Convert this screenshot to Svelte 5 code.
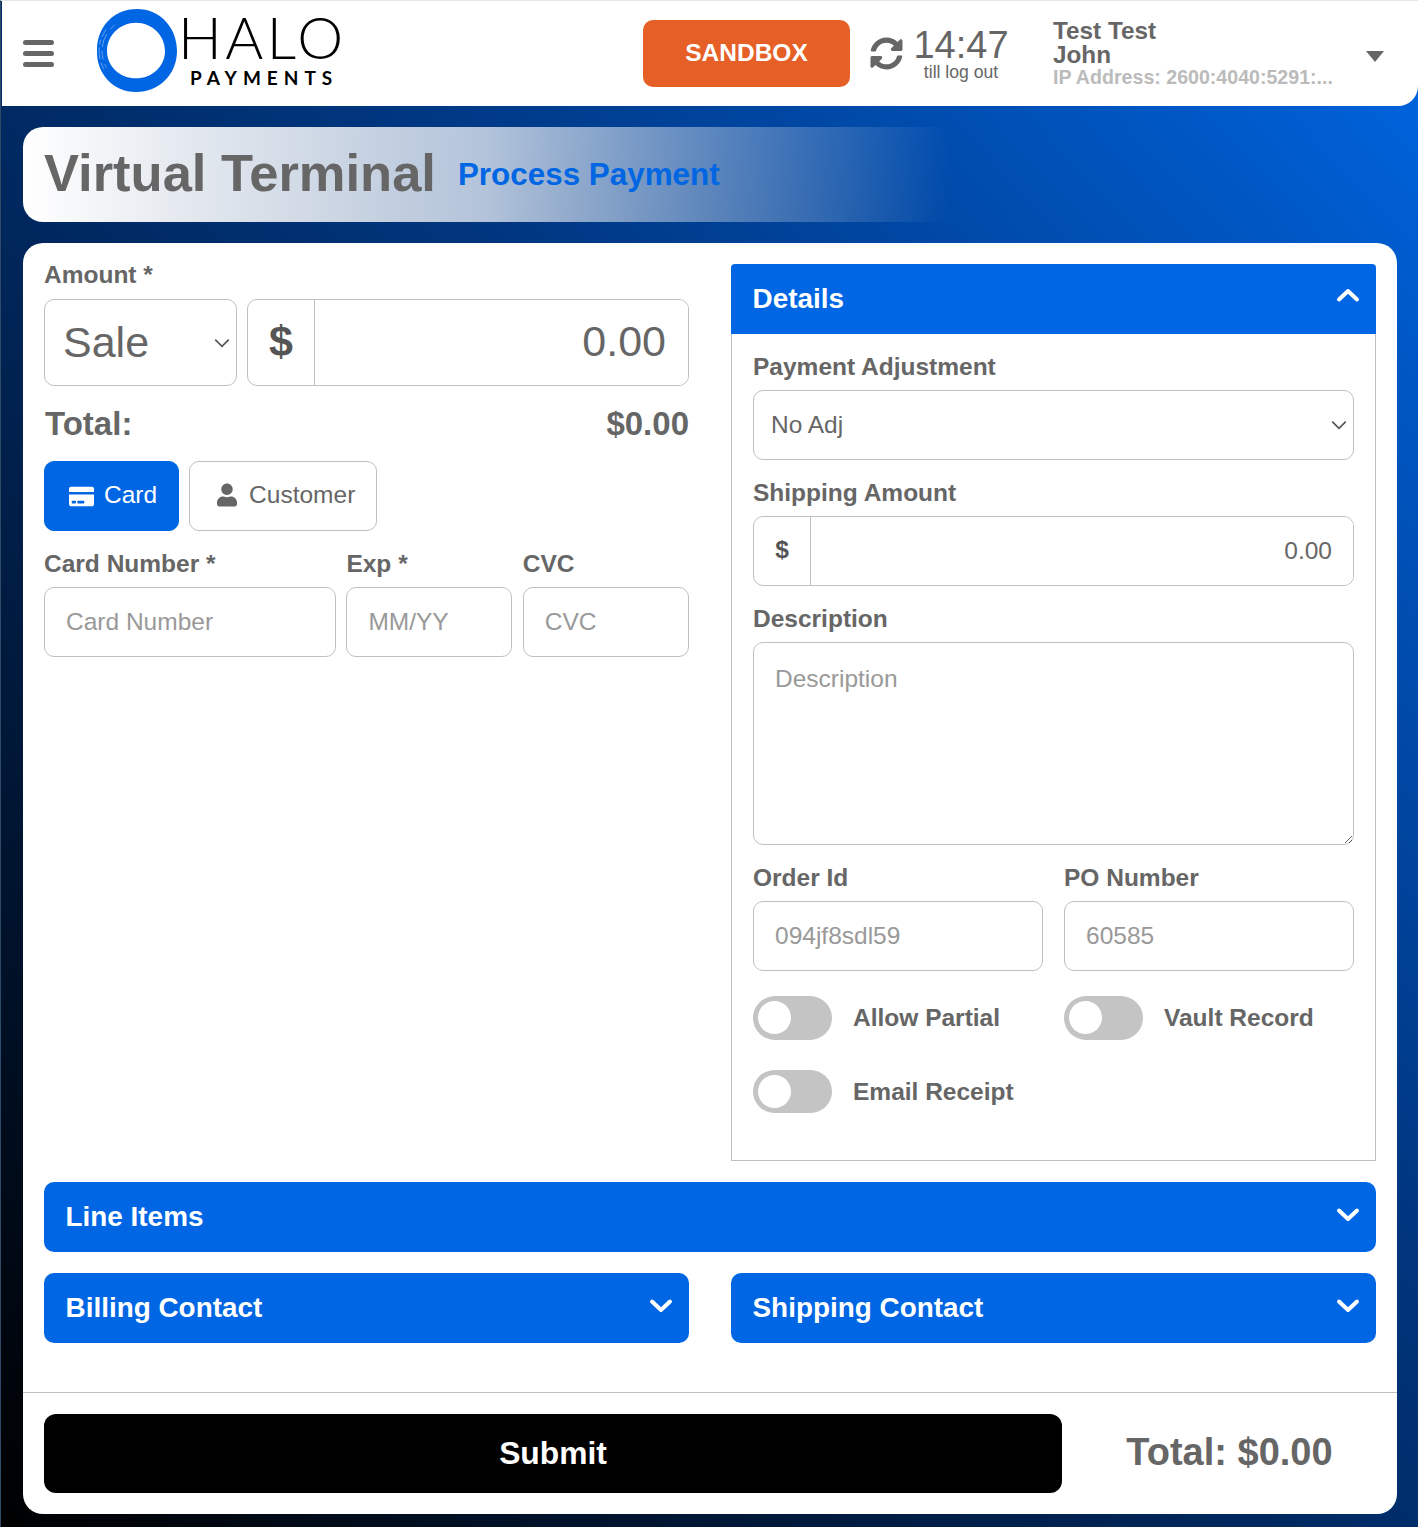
<script>
	let activeTab = $state('card');
	const chevron = { up: 'M3 15.500 12 7l9 8.500', down: 'M3 8.500 12 17l9-8.500' };
</script>

{#snippet chev(dir)}
	<svg class="chev" viewBox="0 0 24 24" fill="none" stroke="currentColor" stroke-width="4" stroke-linecap="round" stroke-linejoin="round" aria-hidden="true">
		<path d={chevron[dir]} />
	</svg>
{/snippet}

{#snippet toggle(label)}
	<label class="toggle">
		<span class="track"><span class="knob"></span></span>
		<span class="toggle-label">{label}</span>
	</label>
{/snippet}

<div class="page">
	<header class="topbar">
		<button class="burger" aria-label="Menu">
			<span></span><span></span><span></span>
		</button>
		<div class="logo">
			<svg class="ring" viewBox="0 0 82 86" preserveAspectRatio="none" aria-hidden="true">
				<path fill="#0066e3" fill-rule="evenodd" d="M41 0C64 0 81 19 81 43 81 67 63 85 40 85 17 85 0 66 1 42 1 18 18 0 41 0ZM40 14C24 14 11 27 11 43 11 59 24 71 40 71 56 71 69 59 69 43 69 27 56 14 40 14Z" />
				<g fill="none" stroke="#fff" stroke-width="0.700" opacity="0.5" transform="rotate(150 40 43)">
					<circle cx="40" cy="43" r="37" stroke-dasharray="7 4 12 3 5 3 9 200" />
					<circle cx="40" cy="43" r="34" stroke-dasharray="4 5 9 4 14 6 6 200" />
				</g>
			</svg>
			<div class="wordmark">
				<span class="halo">HALO</span>
				<span class="payments">PAYMENTS</span>
			</div>
		</div>

		<button class="sandbox">SANDBOX</button>

		<svg class="sync" viewBox="0 0 512 512" aria-hidden="true">
			<path fill="currentColor" d="M370.72 133.28C339.458 104.008 298.888 87.962 255.848 88c-77.458.068-144.328 53.178-162.791 126.85-1.344 5.363-6.122 9.15-11.651 9.15H24.103c-7.498 0-13.194-6.807-11.807-14.176C33.933 94.924 134.813 8 256 8c66.448 0 126.791 26.136 171.315 68.685L463.03 40.97C478.149 25.851 504 36.559 504 57.941V192c0 13.255-10.745 24-24 24H345.941c-21.382 0-32.09-25.851-16.971-40.971l41.75-41.749zM32 296h134.059c21.382 0 32.09 25.851 16.971 40.971l-41.75 41.75c31.262 29.273 71.835 45.319 114.876 45.28 77.418-.07 144.315-53.144 162.787-126.849 1.344-5.363 6.122-9.15 11.651-9.15h57.304c7.498 0 13.194 6.807 11.807 14.176C478.067 417.076 377.187 504 256 504c-66.448 0-126.791-26.136-171.315-68.685L48.97 471.03C33.851 486.149 8 475.441 8 454.059V320c0-13.255 10.745-24 24-24z" />
		</svg>
		<div class="timer">
			<span class="clock">14:47</span>
			<span class="till">till log out</span>
		</div>

		<div class="user">
			<div class="user-name">Test Test</div>
			<div class="user-name">John</div>
			<div class="user-ip">IP Address: 2600:4040:5291:...</div>
		</div>
		<span class="caret" aria-hidden="true"></span>
	</header>

	<main class="content">
		<div class="title-bar">
			<h1>Virtual Terminal</h1>
			<span class="subtitle">Process Payment</span>
		</div>

		<section class="card">
			<div class="card-body">
				<div class="columns">
					<div class="col">
						<div class="field-label first">Amount *</div>
						<div class="amount-row">
							<select class="big-select">
								<option>Sale</option>
							</select>
							<div class="group big">
								<span class="prefix">$</span>
								<input class="num" value="0.00" />
							</div>
						</div>
						<div class="total-row">
							<span>Total:</span>
							<span>$0.00</span>
						</div>
						<div class="tabs">
							<button class="tab" class:active={activeTab === 'card'} onclick={() => (activeTab = 'card')}>
								<svg class="tab-card" viewBox="0 0 576 512" aria-hidden="true">
									<path fill="currentColor" d="M0 432c0 26.500 21.500 48 48 48h480c26.500 0 48-21.500 48-48V210H0v222zm192-68c0-6.600 5.400-12 12-12h136c6.600 0 12 5.400 12 12v40c0 6.600-5.400 12-12 12H204c-6.600 0-12-5.400-12-12v-40zm-128 0c0-6.600 5.400-12 12-12h72c6.600 0 12 5.400 12 12v40c0 6.600-5.400 12-12 12H76c-6.600 0-12-5.400-12-12v-40zM576 80v70H0V80c0-26.500 21.500-48 48-48h480c26.500 0 48 21.500 48 48z" />
								</svg>
								Card
							</button>
							<button class="tab" class:active={activeTab === 'customer'} onclick={() => (activeTab = 'customer')}>
								<svg class="tab-user" viewBox="0 0 448 512" aria-hidden="true">
									<path fill="currentColor" d="M224 256c70.700 0 128-57.300 128-128S294.700 0 224 0 96 57.300 96 128s57.300 128 128 128zm89.600 32h-16.700c-22.200 10.200-46.900 16-72.900 16s-50.600-5.800-72.900-16h-16.700C60.200 288 0 348.200 0 422.400V464c0 26.500 21.500 48 48 48h352c26.500 0 48-21.500 48-48v-41.600c0-74.200-60.200-134.400-134.400-134.400z" />
								</svg>
								Customer
							</button>
						</div>
						<div class="card-fields">
							<div>
								<div class="field-label">Card Number *</div>
								<input class="text-input" placeholder="Card Number" />
							</div>
							<div>
								<div class="field-label">Exp *</div>
								<input class="text-input" placeholder="MM/YY" />
							</div>
							<div>
								<div class="field-label">CVC</div>
								<input class="text-input" placeholder="CVC" />
							</div>
						</div>
					</div>

					<div class="col">
						<div class="panel-head open">
							<span>Details</span>
							{@render chev('up')}
						</div>
						<div class="panel-body">
							<div class="field-label">Payment Adjustment</div>
							<select class="text-input select">
								<option>No Adj</option>
							</select>

							<div class="field-label spaced">Shipping Amount</div>
							<div class="group">
								<span class="prefix small">$</span>
								<input class="num small" value="0.00" />
							</div>

							<div class="field-label spaced">Description</div>
							<textarea class="text-input area" placeholder="Description"></textarea>

							<div class="split spaced">
								<div>
									<div class="field-label">Order Id</div>
									<input class="text-input" placeholder="094jf8sdl59" />
								</div>
								<div>
									<div class="field-label">PO Number</div>
									<input class="text-input" placeholder="60585" />
								</div>
							</div>

							<div class="split toggles">
								{@render toggle('Allow Partial')}
								{@render toggle('Vault Record')}
							</div>
							<div class="split toggles second">
								{@render toggle('Email Receipt')}
							</div>
						</div>
					</div>
				</div>

				<div class="panel-head closed wide">
					<span>Line Items</span>
					{@render chev('down')}
				</div>

				<div class="columns contacts">
					<div class="panel-head closed">
						<span>Billing Contact</span>
						{@render chev('down')}
					</div>
					<div class="panel-head closed">
						<span>Shipping Contact</span>
						{@render chev('down')}
					</div>
				</div>
			</div>

			<footer class="card-foot">
				<button class="submit">Submit</button>
				<div class="foot-total">Total: $0.00</div>
			</footer>
		</section>
	</main>
</div>

<style>
	:global(body) {
		margin: 0;
	}
	.page {
		box-sizing: border-box;
		height: 1527px;
		overflow: hidden;
		background: linear-gradient(to top right, #000, #003680 60%, #0066e3);
		border-top: 1px solid #e6e6e6;
		border-left: 1px solid #2f4a66;
		font-family: 'Liberation Sans', Arial, sans-serif;
		color: #666;
	}
	button,
	input,
	select,
	textarea {
		font-family: inherit;
	}

	/* top bar */
	.topbar {
		display: flex;
		align-items: center;
		height: 105px;
		margin-left: 1px;
		background: #fff;
		border-bottom-right-radius: 20px;
	}
	.burger {
		display: flex;
		flex-direction: column;
		gap: 6px;
		width: 31px;
		margin-left: 21px;
		padding: 0;
		border: 0;
		background: none;
	}
	.burger span {
		height: 5px;
		border-radius: 3px;
		background: #666;
	}
	.logo {
		display: flex;
		align-self: flex-start;
		align-items: flex-start;
		width: 547px;
		margin-left: 42px;
	}
	.ring {
		width: 82px;
		height: 84px;
		flex: none;
		margin-top: 8px;
	}
	.wordmark {
		display: flex;
		flex-direction: column;
		color: #000;
		margin-top: 7px;
	}
	.halo {
		font-family: Lato, sans-serif;
		font-weight: 300;
		font-size: 58px;
		line-height: 58px;
		letter-spacing: 3.500px;
	}
	.payments {
		font-family: Lato, sans-serif;
		font-weight: 700;
		font-size: 19px;
		line-height: 20px;
		letter-spacing: 6px;
		margin: 2px 0 0 12px;
	}
	.sandbox {
		width: 207px;
		height: 67px;
		flex: none;
		border: 0;
		border-radius: 10px;
		background: #e55f26;
		color: #fff;
		font-size: 24.500px;
		font-weight: 700;
		padding: 0 0 2px;
	}
	.sync {
		width: 33px;
		height: 33px;
		margin-left: 20px;
		flex: none;
		color: #666;
	}
	.timer {
		display: flex;
		flex-direction: column;
		align-items: center;
		width: 92px;
		margin-left: 12px;
		padding-bottom: 2px;
		color: #666;
	}
	.clock {
		font-size: 38px;
		line-height: 40px;
		margin-bottom: -2px;
	}
	.till {
		font-size: 17.600px;
		line-height: 18px;
	}
	.user {
		width: 312px;
		margin-left: 46px;
		padding-bottom: 2px;
		flex: none;
	}
	.user-name {
		font-size: 24.300px;
		line-height: 24px;
		font-weight: 700;
		color: #666;
	}
	.user-ip {
		font-size: 19.600px;
		line-height: 20px;
		font-weight: 700;
		color: #bbb;
		white-space: nowrap;
	}
	.caret {
		width: 0;
		height: 0;
		margin: 5px 0 0 1px;
		border-left: 9px solid transparent;
		border-right: 9px solid transparent;
		border-top: 11px solid #666;
	}

	/* title */
	.content {
		padding: 21px 21px 0 22px;
	}
	.title-bar {
		display: flex;
		align-items: center;
		width: 927px;
		height: 95px;
		padding-left: 21px;
		box-sizing: border-box;
		border-radius: 20px 0 0 20px;
		background: linear-gradient(to right, #fff, rgba(255, 255, 255, 0.7) 50%, rgba(255, 255, 255, 0));
	}
	h1 {
		margin: 0 0 4px;
		font-size: 52.500px;
		font-weight: 700;
		color: #666;
	}
	.subtitle {
		margin-left: 22px;
		font-size: 31.400px;
		font-weight: 700;
		color: #0066e3;
	}

	/* main card */
	.card {
		margin-top: 21px;
		background: #fff;
		border-radius: 20px;
	}
	.card-body {
		padding: 21px 21px 49px;
	}
	.columns {
		display: grid;
		grid-template-columns: 645px 645px;
		column-gap: 42px;
	}
	.field-label {
		font-size: 24.500px;
		font-weight: 700;
		line-height: 24px;
		margin-bottom: 11px;
		color: #666;
	}
	.field-label.first {
		line-height: 22px;
		margin-bottom: 13px;
	}
	.spaced {
		margin-top: 21px;
	}
	.amount-row {
		display: flex;
		gap: 10px;
		height: 87px;
	}
	.big-select {
		width: 193px;
		flex: none;
		box-sizing: border-box;
		appearance: none;
		padding: 0 0 2px 18px;
		font-size: 43px;
		color: #666;
		border: 1px solid #c0c0c0;
		border-radius: 10px;
		background: #fff url("data:image/svg+xml,%3Csvg xmlns='http://www.w3.org/2000/svg' viewBox='0 0 16 16'%3E%3Cpath fill='none' stroke='%23555' stroke-width='1.500' d='M2 5l6 6 6-6'/%3E%3C/svg%3E") no-repeat right 5px center / 18px;
	}
	.group {
		flex: 1;
		display: flex;
		height: 70px;
		box-sizing: border-box;
		border: 1px solid #c0c0c0;
		border-radius: 10px;
		overflow: hidden;
	}
	.group.big {
		height: 87px;
	}
	.prefix {
		display: flex;
		align-items: center;
		justify-content: center;
		width: 67px;
		flex: none;
		box-sizing: border-box;
		padding-bottom: 2px;
		border-right: 1px solid #c0c0c0;
		font-size: 43px;
		font-weight: 700;
		color: #555;
	}
	.prefix.small {
		width: 57px;
		padding-bottom: 3px;
		font-size: 24.500px;
	}
	.num {
		flex: 1;
		min-width: 0;
		border: 0;
		outline: 0;
		padding: 0 22px 2px 0;
		text-align: right;
		font-size: 43px;
		color: #666;
	}
	.num.small {
		padding: 0 21px 0 0;
		font-size: 24.500px;
	}
	.total-row {
		display: flex;
		justify-content: space-between;
		margin: 21px 0;
		font-size: 33px;
		line-height: 33px;
		font-weight: 700;
		padding-left: 1px;
		color: #666;
	}
	.tabs {
		display: flex;
		gap: 10px;
		margin-bottom: 21px;
	}
	.tab {
		display: flex;
		align-items: center;
		gap: 10px;
		height: 70px;
		padding: 0 21px 2px 24px;
		border: 1px solid #c0c0c0;
		border-radius: 10px;
		background: #fff;
		color: #666;
		font-size: 24.500px;
	}
	.tab.active {
		background: #0066e3;
		border-color: #0066e3;
		color: #fff;
	}
	.tab-card {
		width: 25px;
		height: 25px;
		margin-top: 2px;
	}
	.tab-user {
		width: 20px;
		height: 24px;
		margin: 0 2px 0 3px;
	}
	.card-fields {
		display: grid;
		grid-template-columns: 292px 166px 166px;
		column-gap: 10.400px;
	}
	.text-input {
		display: block;
		width: 100%;
		height: 70px;
		box-sizing: border-box;
		padding: 0 21px;
		border: 1px solid #c0c0c0;
		border-radius: 10px;
		background: #fff;
		font-size: 24.500px;
		color: #666;
		outline: 0;
	}
	.text-input::placeholder {
		color: #999;
		opacity: 1;
	}
	.select {
		appearance: none;
		padding: 0 0 2px 17px;
		background: #fff url("data:image/svg+xml,%3Csvg xmlns='http://www.w3.org/2000/svg' viewBox='0 0 16 16'%3E%3Cpath fill='none' stroke='%23555' stroke-width='1.500' d='M2 5l6 6 6-6'/%3E%3C/svg%3E") no-repeat right 5px center / 18px;
	}
	.area {
		height: 203px;
		padding-top: 22px;
		resize: vertical;
	}

	/* panels */
	.panel-head {
		display: flex;
		align-items: center;
		justify-content: space-between;
		box-sizing: border-box;
		height: 70px;
		padding: 0 16px 0 21.500px;
		background: #0066e3;
		color: #fff;
		font-size: 27.900px;
		font-weight: 700;
	}
	.panel-head.open {
		border-radius: 4px 4px 0 0;
	}
	.panel-head.closed {
		border-radius: 10px;
	}
	.panel-head.wide,
	.contacts {
		margin-top: 21px;
	}
	.chev {
		width: 24px;
		height: 24px;
		margin-top: -7px;
	}
	.panel-body {
		box-sizing: border-box;
		padding: 21px 21px 47px;
		border: 1px solid #c0c0c0;
		border-top: 0;
	}
	.split {
		display: grid;
		grid-template-columns: 290px 290px;
		column-gap: 21px;
	}
	.toggles {
		margin-top: 25px;
	}
	.toggles.second {
		margin-top: 30px;
	}
	.second .track {
		height: 43px;
	}
	.toggle {
		display: flex;
		align-items: center;
		gap: 21px;
	}
	.track {
		display: block;
		width: 79px;
		height: 44px;
		flex: none;
		box-sizing: border-box;
		padding: 5px;
		border-radius: 22px;
		background: #c4c4c4;
	}
	.knob {
		display: block;
		width: 33px;
		height: 33px;
		border-radius: 50%;
		background: #fff;
	}
	.toggle-label {
		font-size: 24.500px;
		font-weight: 700;
		color: #666;
	}

	/* footer */
	.card-foot {
		display: flex;
		align-items: center;
		padding: 21px;
		border-top: 1px solid #c0c0c0;
	}
	.submit {
		width: 1018px;
		height: 79px;
		flex: none;
		border: 0;
		border-radius: 12px;
		background: #000;
		color: #fff;
		font-size: 31.800px;
		font-weight: 700;
	}
	.foot-total {
		flex: 1;
		padding: 0 0 2px 21px;
		text-align: center;
		font-size: 38px;
		font-weight: 700;
		color: #666;
	}
</style>
